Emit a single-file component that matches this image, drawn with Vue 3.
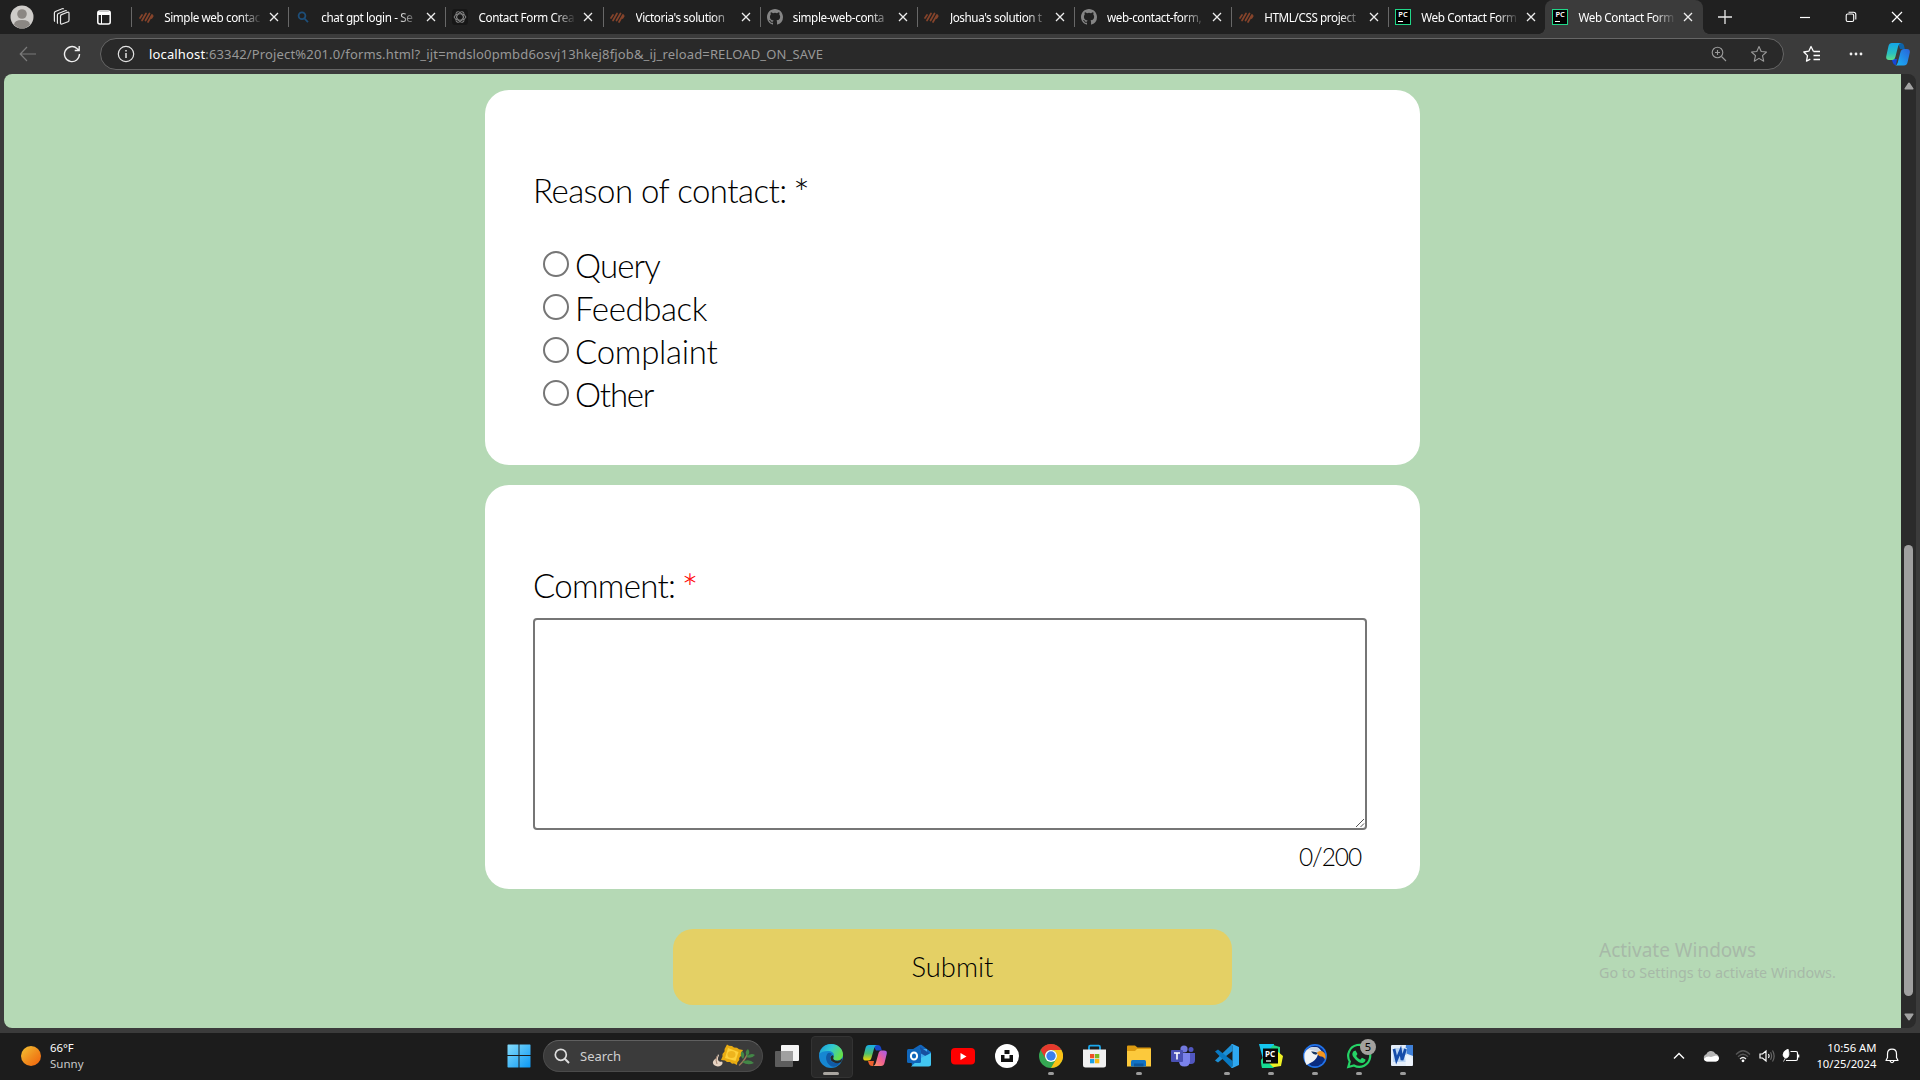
<script setup>
const tabs = [
  { icon: 'fcc', title: 'Simple web contac' },
  { icon: 'search', title: 'chat gpt login - Se' },
  { icon: 'gpt', title: 'Contact Form Crea' },
  { icon: 'fcc', title: "Victoria's solution" },
  { icon: 'github', title: 'simple-web-conta' },
  { icon: 'fcc', title: "Joshua's solution t" },
  { icon: 'github', title: 'web-contact-form,' },
  { icon: 'fcc', title: 'HTML/CSS project' },
  { icon: 'pc', title: 'Web Contact Form' },
  { icon: 'pc', title: 'Web Contact Form', active: true },
]
const reasons = ['Query', 'Feedback', 'Complaint', 'Other']
</script>

<template>
  <div class="screen">
    <header class="strip">
      <div class="lead">
        <svg class="avatar" width="24" height="28" viewBox="0 0 24 28"><circle cx="12" cy="14" r="11.5" fill="#cfcdca"/><circle cx="12" cy="11" r="4.8" fill="#8b8783"/><path d="M4 22q0-5 8-5t8 5q-8 7-16 0" fill="#8b8783"/></svg>
        <svg class="spaces" width="18" height="20" viewBox="0 0 18 20" fill="none" stroke="#e8e8e8" stroke-width="1.200" stroke-linejoin="round"><path d="M7.500 9.200q0-1.200 1-1.600l6-2.300q1.500-.4 1.500 1v7q0 1-1 1.400l-6 2.300q-1.500.4-1.500-1zM5 16.500q-.6-.3-.6-1V8q0-1 1-1.500l6.800-2.700q1-.3 1.500.3M2 14.500q-.6-.3-.6-1V6q0-1 1-1.500l6.800-2.700q1-.3 1.500.3"/></svg>
        <svg class="vert" width="14" height="15" viewBox="0 0 14 15"><rect x=".8" y="1" width="12.400" height="13" rx="2" fill="none" stroke="#fff" stroke-width="1.500"/><path d="M1 2h12v3H1z" fill="#fff"/><path d="M4.500 5v9" stroke="#fff"/></svg>
      </div>
      <div v-for="(t, i) in tabs" :key="i" class="tab" :class="{ active: t.active }">
        <span class="fav">
          <svg v-if="t.icon === 'fcc'" width="15" height="12" viewBox="0 0 15 12" stroke="#86442b" stroke-width="1.700" stroke-linecap="round"><path d="M1 7l2-3M3 9.500l4-7M6.500 9.500l4-7M9 11l4-7M12.500 7l1.200-2"/></svg>
          <svg v-else-if="t.icon === 'search'" width="12" height="12" viewBox="0 0 12 12" fill="none" stroke="#1d4e79" stroke-width="1.800"><circle cx="5" cy="4.800" r="3.400"/><path d="M7.500 7.500l3.500 3.700"/></svg>
          <svg v-else-if="t.icon === 'gpt'" width="16" height="16" viewBox="0 0 16 16"><rect width="16" height="16" rx="3" fill="#171717"/><g fill="none" stroke="#858585" stroke-width="1"><ellipse cx="8" cy="8" rx="5.800" ry="3.200"/><ellipse cx="8" cy="8" rx="5.800" ry="3.200" transform="rotate(60 8 8)"/><ellipse cx="8" cy="8" rx="5.800" ry="3.200" transform="rotate(120 8 8)"/></g></svg>
          <svg v-else-if="t.icon === 'github'" width="16" height="16" viewBox="0 0 16 16"><path fill="#858585" d="M8 0C3.580 0 0 3.580 0 8c0 3.540 2.290 6.530 5.470 7.590.4.070.55-.17.55-.38v-1.490c-2.010.37-2.530-.49-2.690-.94-.09-.23-.48-.94-.82-1.130-.28-.15-.68-.52-.01-.53.63-.01 1.080.58 1.230.82.72 1.210 1.870.87 2.330.66.07-.52.28-.87.51-1.070-1.780-.2-3.640-.89-3.640-3.950 0-.87.310-1.590.82-2.150-.08-.2-.36-1.020.08-2.120 0 0 .67-.21 2.200.82a7.600 7.600 0 0 1 4 0c1.530-1.040 2.200-.82 2.200-.82.44 1.100.16 1.920.08 2.120.51.560.82 1.270.82 2.150 0 3.070-1.870 3.750-3.650 3.950.29.25.54.730.54 1.480v2.200c0 .21.150.46.55.38A8 8 0 0 0 16 8c0-4.420-3.580-8-8-8z"/></svg>
          <span v-else class="pcfav"><b>PC</b><i></i></span>
        </span>
        <span class="title">{{ t.title }}</span>
        <svg class="x" width="10" height="10" viewBox="0 0 10 10" stroke="#eee" stroke-width="1.300"><path d="M1 1l8 8M9 1l-8 8"/></svg>
      </div>
      <svg class="plus" width="14" height="14" viewBox="0 0 14 14" stroke="#e8e8e8" stroke-width="1.300"><path d="M7 0v14M0 7h14"/></svg>
      <div class="winctl">
        <svg width="12" height="12" viewBox="0 0 12 12" stroke="#fff" stroke-width="1.200"><path d="M1 6.500h10"/></svg>
        <svg width="12" height="12" viewBox="0 0 12 12" fill="none" stroke="#fff" stroke-width="1.100"><rect x="1.200" y="3" width="7.500" height="7.500" rx="1.500"/><path d="M3.500 1.200h5q2.300 0 2.300 2.300v5"/></svg>
        <svg width="12" height="12" viewBox="0 0 12 12" stroke="#fff" stroke-width="1.200"><path d="M1 1l10 10M11 1L1 11"/></svg>
      </div>
    </header>

    <nav class="toolbar">
      <svg class="back" width="18" height="16" viewBox="0 0 18 16" fill="none" stroke="#7b7b7b" stroke-width="1.200"><path d="M17 8H1.500M8 1L1.200 8 8 15"/></svg>
      <svg class="reload" width="18" height="18" viewBox="0 0 18 18" fill="none" stroke="#eee" stroke-width="1.400"><path d="M16.500 9A7.500 7.500 0 1 1 14 3.500L16 5.200M16.200 1v4.500h-4.500"/></svg>
      <div class="address">
        <svg class="info" width="18" height="18" viewBox="0 0 18 18" fill="none" stroke="#e3e3e3" stroke-width="1.200"><circle cx="9" cy="9" r="7.700"/><path d="M9 8v5M9 5v1.500" stroke-width="1.500"/></svg>
        <span class="url"><b>localhost</b>:63342/Project%201.0/forms.html?_ijt=mdslo0pmbd6osvj13hkej8fjob&amp;_ij_reload=RELOAD_ON_SAVE</span>
        <svg class="zoomi" width="16" height="16" viewBox="0 0 16 16" fill="none" stroke="#9a9a9a" stroke-width="1.100"><circle cx="6.500" cy="6.500" r="5.300"/><path d="M10.500 10.500l4.500 4.500M6.500 4v5M4 6.500h5"/></svg>
        <svg class="star" width="18" height="18" viewBox="0 0 18 18" fill="none" stroke="#9a9a9a" stroke-width="1.100" stroke-linejoin="round"><path d="M9 1.500l2.200 5 5.300.5-4 3.700 1.200 5.500L9 13.400l-4.700 2.800 1.200-5.500-4-3.700 5.300-.5z"/></svg>
      </div>
      <svg class="favs" width="18" height="18" viewBox="0 0 18 18" fill="none" stroke="#fff" stroke-width="1.300" stroke-linejoin="round"><path d="M10.500 6.500L8 1.500 5.800 6.200.8 7l3.700 3.600-1 5.600 3.800-2M10.500 6.500H17M10.500 10.500H17M10.500 14.500H17"/></svg>
      <svg class="dots" width="14" height="4" viewBox="0 0 14 4" fill="#f0f0f0"><circle cx="2" cy="2" r="1.400"/><circle cx="7" cy="2" r="1.400"/><circle cx="12" cy="2" r="1.400"/></svg>
      <svg class="copilot" width="24" height="24" viewBox="0 0 24 24">
        <defs>
          <linearGradient id="cp1" x1="0" y1="0" x2="0" y2="1"><stop offset="0" stop-color="#13a5e8"/><stop offset=".6" stop-color="#2ac0c0"/><stop offset="1" stop-color="#5fdc8a"/></linearGradient>
          <linearGradient id="cp2" x1="1" y1="0" x2="0" y2="1"><stop offset="0" stop-color="#2a62d8"/><stop offset="1" stop-color="#18b8f8"/></linearGradient>
        </defs>
        <path d="M12 1h3q2.500 0 3 2.500l.8 3.500H14z" fill="#0d62a8"/><path d="M5.500 17H11l-1 6q-2.500 0-3-2z" fill="#1546d8"/>
        <path d="M6 1h9q-2 0-2.800 3L9.500 14.500Q8.700 18 6 18H3Q-.5 18 .3 14L2.500 4Q3.200 1 6 1z" fill="url(#cp1)"/><path d="M18 23.500H9q2 0 2.800-3L14.500 10Q15.300 7 18 7h3q3.500 0 2.700 4l-2.200 9.500q-.7 3-3.500 3z" fill="url(#cp2)"/>
      </svg>
    </nav>

    <div class="viewport">
      <main class="page">
        <section class="card reason">
          <h2 class="legend">Reason of contact: <span class="ast">*</span></h2>
          <label v-for="r in reasons" :key="r" class="opt"><input type="radio" name="reason"><span :class="r.toLowerCase()">{{ r }}</span></label>
        </section>
        <section class="card comment">
          <h2 class="legend">Comment: <span class="ast red">*</span></h2>
          <div class="area"><svg width="10" height="10" viewBox="0 0 10 10" stroke="#555" stroke-width="1"><path d="M1 9l8-8M5.500 9L9 5.500"/></svg></div>
          <div class="count">0/200</div>
        </section>
        <button class="submit">Submit</button>
        <div class="watermark"><p class="w1">Activate Windows</p><p class="w2">Go to Settings to activate Windows.</p></div>
      </main>
      <div class="scroll">
        <svg width="10" height="8" viewBox="0 0 10 8"><path d="M5 .5q.6 0 1 .7L9.500 6.500q.3 1-.7 1H1.200q-1 0-.7-1L4 1.200q.4-.7 1-.7z" fill="#a2a2a2"/></svg>
        <div class="thumb"></div>
        <svg width="10" height="8" viewBox="0 0 10 8"><path d="M5 7.500q.6 0 1-.7L9.500 1.500q.3-1-.7-1H1.200q-1 0-.7 1L4 6.800q.4.700 1 .7z" fill="#a2a2a2"/></svg>
      </div>
    </div>

    <footer class="taskbar">
      <div class="weather">
        <span class="sun"></span>
        <div><p class="temp">66°F</p><p class="cond">Sunny</p></div>
      </div>
      <svg class="start" width="24" height="24" viewBox="0 0 24 24"><defs><linearGradient id="wn" x1="0" y1="0" x2="1" y2="1"><stop offset="0" stop-color="#84dcfc"/><stop offset="1" stop-color="#0c98f4"/></linearGradient></defs><path d="M1 .5h10.500V11H.5V1zM12.500.5H23L23.500 1v10h-11zM.5 12h11v11.500H1L.5 23zM12.500 12h11v11l-.5.5H12.500z" fill="url(#wn)"/></svg>
      <div class="search">
        <svg width="16" height="16" viewBox="0 0 16 16" fill="none" stroke="#ddd" stroke-width="1.700"><circle cx="6.800" cy="6.800" r="5.500"/><path d="M10.800 10.800l4.200 4.200" stroke-width="2"/></svg>
        <span>Search</span>
        <svg class="food" width="46" height="24" viewBox="0 0 46 24"><path d="M6 10q-.5 4-3.500 5.500-3 2.500-.5 5.500 3.500 2.500 7 .5 2.500-2 1-4-3 1-4-1.500-.5-2 1-4.500z" fill="#e6d3c2"/><path d="M5 12q-2 4 0 8" stroke="#a58672" fill="none"/><path d="M15 .5l2 1.300 3 .2 2 1.500 3 .2 2 1.600 4 .7-2 3.500.2 2-2 2.500.1 2-2 2.500-.3 2.500-3-1.500-2 .2-2-1.600-3-.1-2-1.600-4-.4 1.500-3.500V10l2-2.500.1-2.500z" fill="#e9ac12"/><path d="M16 4l10.500 4-3 9L13 14z" fill="#fdd03a"/><ellipse cx="19.500" cy="10.500" rx="4" ry="3.500" fill="#eeb41e"/><path d="M27 21.500q6-5 9-13" stroke="#9a7a5a" stroke-width="1.500" fill="none"/><path d="M31 15q-4-4-1-8 4 3 1 8zM35 12q-3-4 1-7 3 4-1 7zM34 13q5-5 9-2-3 4-9 2zM30 18q7-4 12 1-6 3-12-1z" fill="#438747"/></svg>
      </div>
      <div class="apps">
        <div class="app"><svg width="24" height="24" viewBox="0 0 24 24"><rect x="6" y="1" width="18" height="16" rx="1" fill="#f4f4f4"/><rect y="7" width="18" height="16" rx="1" fill="#5d5d5d"/><path d="M6 7h12v10H6z" fill="#a0a0a0"/></svg></div>
        <div class="app edge on"><svg width="24" height="24" viewBox="0 0 24 24"><defs><linearGradient id="e1" x1="0" y1="0" x2="1" y2=".5"><stop offset="0" stop-color="#1897dc"/><stop offset=".5" stop-color="#31c9d1"/><stop offset="1" stop-color="#66e04a"/></linearGradient></defs><circle cx="12" cy="12" r="12" fill="#1687d2"/><path d="M.3 10C1.500 4 6 0 12 0c7 0 12 5 12 10.500 0 3.500-2.500 6-6 6-3 0-4.500-1.200-4-2.300 2-2.500 1-6.700-4-7.200-4-.3-8 .7-9.700 3z" fill="url(#e1)"/><path d="M9 9c-3 3-2.500 9 2 12.500 3 2.300 8 1.500 10.500-3.500-5 2.500-10 .5-10.500-4q0-2 2-4-2-1.700-4-1z" fill="#115aa5"/><path d="M14.300 13.500q-.7 3 4 3.200 3 0 5-2.500l-.9 3.800Q19 20 15 18.500T11.500 13q1-2 2.500-1.700 1 1 .3 2.200z" fill="#282828"/></svg></div>
        <div class="app"><svg width="24" height="24" viewBox="0 0 24 24"><defs><linearGradient id="c1" x1="0" y1="0" x2="0" y2="1"><stop offset="0" stop-color="#17aee8"/><stop offset=".55" stop-color="#4cc070"/><stop offset="1" stop-color="#f6d400"/></linearGradient><linearGradient id="c2" x1="1" y1="0" x2="0" y2="1"><stop offset="0" stop-color="#a35cf0"/><stop offset=".5" stop-color="#ee5f93"/><stop offset="1" stop-color="#ffa060"/></linearGradient></defs><path d="M10 1h5q2.500 0 3 2.500l.8 3H13z" fill="#1747c8"/><path d="M5 17h6l-1 5q-3 .5-4-2z" fill="#ee602d"/><path d="M6 1h8q-2 0-2.800 3L8.700 13Q8 16.500 5.500 16.500H3Q-.5 16.500.3 13L2.500 4Q3.200 1 6 1z" fill="url(#c1)"/><path d="M18 22H10q2 0 2.800-3l2.500-9Q16 6.500 18.500 6.500H21q3.500 0 2.700 3.500L21.500 19q-.7 3-3.500 3z" fill="url(#c2)"/></svg></div>
        <div class="app"><svg width="24" height="24" viewBox="0 0 24 24"><path d="M3 7l9.500-6q1-.5 2 0L24 8v12q0 2-2 2H5z" fill="#1266bd"/><path d="M7 5h13v9H7z" fill="#40a9ec"/><path d="M13 3l9 6v5l-9-5z" fill="#174f9f"/><path d="M12 15l12-6v11q0 2.500-2.500 2.500H4z" fill="#42c6f1"/><rect y="5" width="14" height="14" rx="1.500" fill="#1066ba"/><ellipse cx="7" cy="12" rx="3.100" ry="3.500" fill="none" stroke="#fff" stroke-width="2"/></svg></div>
        <div class="app"><svg width="24" height="24" viewBox="0 0 24 24"><rect y="4" width="24" height="16.500" rx="4" fill="#f00"/><path d="M9.500 9v7l6-3.500z" fill="#fff"/></svg></div>
        <div class="app"><svg width="24" height="24" viewBox="0 0 24 24"><circle cx="12" cy="12" r="12" fill="#fff"/><path d="M9.500 6h5v4h-5zM6 11h3.500v3.500h5V11H18v7H6z" fill="#111"/></svg></div>
        <div class="app run"><svg width="24" height="24" viewBox="0 0 24 24"><circle cx="12" cy="12" r="12" fill="#35a853"/><path d="M1.600 6A12 12 0 0 1 22.400 6H12a6 6 0 0 0-5.200 9z" fill="#e5392d"/><path d="M22.400 6A12 12 0 0 1 12 24l5.200-9A6 6 0 0 0 12 6z" fill="#fbc116"/><circle cx="12" cy="12" r="6" fill="#fff"/><circle cx="12" cy="12" r="4.700" fill="#3b7fee"/></svg></div>
        <div class="app"><svg width="24" height="24" viewBox="0 0 24 24"><path d="M6 6V3q0-1.300 1.300-1.300h8.400Q17 1.700 17 3v3" fill="none" stroke="#1ba7ec" stroke-width="1.800"/><path d="M0 5.500h23V21q0 2.500-2.500 2.500h-18Q0 23.500 0 21z" fill="#f1f1f1"/><path d="M7 10h4.300v4.300H7z" fill="#f05125"/><path d="M12 10h4.300v4.300H12z" fill="#7cb821"/><path d="M7 15h4.300v4.300H7z" fill="#1ba0e4"/><path d="M12 15h4.300v4.300H12z" fill="#fcb813"/></svg></div>
        <div class="app run"><svg width="24" height="24" viewBox="0 0 24 24"><path d="M0 2.500Q0 1.500 1 1.500h7l2.500 2H23q1 0 1 1V9H0z" fill="#dc9a10"/><path d="M0 7h8l2-2h14v17.500H0z" fill="#fcc93c"/><path d="M4 22.500v-5Q4 16 5.500 16h12q1.500 0 1.500 1.500v5z" fill="#1273c4"/><path d="M7 19.500h9.500v3H7z" fill="#0c579d"/></svg></div>
        <div class="app"><svg width="24" height="24" viewBox="0 0 24 24"><circle cx="13" cy="5" r="3.600" fill="#7279df"/><circle cx="20" cy="5.500" r="2.500" fill="#5157c0"/><path d="M16 9h8v7q0 4-4 4h-4z" fill="#5157c0"/><path d="M8 9h11v8q0 5.500-5.500 5.500T8 17z" fill="#7b83eb"/><rect y="6" width="12" height="12" rx="1" fill="#4950b3"/><path d="M3 9h6M6 9v6.500" stroke="#fff" stroke-width="1.600"/></svg></div>
        <div class="app run"><svg width="24" height="24" viewBox="0 0 24 24"><path d="M17.500 0v7L3 18.500 0 16.500 16 1z" fill="#1c8fd5"/><path d="M0 7.500l3-2L17.500 17v7q-1 0-2-1z" fill="#0879c2"/><path d="M17.500 0L24 3v18l-6.500 3q-1 0-1.500-1 1.500.3 1.500-1V2q0-1.500-1.500-1 .5-1 1.500-1z" fill="#2ea8f1"/></svg></div>
        <div class="app run"><svg width="24" height="24" viewBox="0 0 24 24"><path d="M0 0h15l-2 15-8 4z" fill="#15c6ef"/><path d="M14 1l7 2v8L9 24H3l-1-8z" fill="#20d887"/><path d="M18 7l6 5-2 10-13 2-2-5z" fill="#eef024"/><path d="M2 17l8 2 5 5H3z" fill="#16db92"/><rect x="4" y="4.500" width="15" height="15" fill="#080808"/><path d="M7 17h5" stroke="#fff" stroke-width="1.200"/></svg><b class="pctxt">PC</b></div>
        <div class="app run"><svg width="24" height="24" viewBox="0 0 24 24"><circle cx="12" cy="12" r="11.900" fill="#2172e8"/><circle cx="12" cy="12" r="10.300" fill="#0a2c80"/><path d="M1.500 9.500Q4 3.500 10 3q6-.3 8 4l-3 3q-1 5-5 7.500-4 2-6.500 3.500Q.5 15 1.500 9.500z" fill="#f0f3f5"/><path d="M5 5.500Q9 2 15 3.500l4 4-4 1q-3-2-10-3z" fill="#c9d4e2"/><path d="M8 7.500q4-.5 7 1.500l-2 1.800q-3-.3-5-3.300z" fill="#183863"/><path d="M14 8.500q4.500-3 7.500.5 2 3 .8 7-1.500-3.500-4-3.500-3 0-4.300-4z" fill="#f5961e"/></svg></div>
        <div class="app run"><svg width="26" height="26" viewBox="0 0 26 26"><path d="M2.300 24l1.500-5.500A11 11 0 1 1 8 22.500z" fill="none" stroke="#25d366" stroke-width="2.200"/><path d="M9.500 7.500l2 3.500-1.300 2q1.300 2.500 4 3.700l1.800-1.900 3.500 1.800q0 3-3 3.400-3 .5-7-3.500T6.500 10q.5-2.500 3-2.500z" fill="#25d366"/></svg><span class="badge">5</span></div>
        <div class="app run"><svg class="word" width="24" height="24" viewBox="0 0 24 24"><rect x="1" y="1" width="22" height="21" rx="1" fill="#e3edf9"/><path d="M16 1h7v11l-8-3z" fill="#3f80d8"/><path d="M4 4h13l-1 14H3z" fill="#b8d4f3"/><path d="M4 5l2.500 11L10.500 6.500l1.500 9.500 3.500-11" fill="none" stroke="#154caa" stroke-width="2.800"/><path d="M15 11l5 1 3 5-1 5h-6z" fill="#eef4fc"/></svg></div>
      </div>
      <div class="tray">
        <svg class="chev" width="12" height="8" viewBox="0 0 12 8" fill="none" stroke="#fff" stroke-width="1.400"><path d="M1 6.500l5-5 5 5"/></svg>
        <svg class="cloud" width="17" height="12" viewBox="0 0 17 12"><path d="M4 11.500a3.700 3.700 0 0 1-.6-7.200 5 5 0 0 1 9.100-.5 4 4 0 0 1 .5 7.700z" fill="#b5b5b5"/><path d="M4 11.500q-2.500-.3-3.200-2.500Q4 5.500 8 7l5-1.500q3 .5 3 3.200-.5 2.500-3 2.800z" fill="#fff"/></svg>
        <svg class="wifi" width="16" height="14" viewBox="0 0 16 14" fill="none" stroke="#555" stroke-width="1.300"><path d="M1 5.500q7-7.500 14 0M3 7.800q5-5 10 0"/><path d="M5 10q3-3 6 0" stroke="#eee"/><circle cx="8" cy="11.800" r="1.400" fill="#fff" stroke="none"/></svg>
        <svg class="vol" width="16" height="14" viewBox="0 0 16 14" fill="none" stroke="#fff" stroke-width="1.200"><path d="M1 5h2.500L7 2v10L3.500 9H1zM9.500 5q1.300 2 0 4"/><path d="M11.500 3.300q2.200 3.700 0 7.400M13.500 1.500q3.300 5.500 0 11" stroke="#666"/></svg>
        <svg class="bat" width="18" height="14" viewBox="0 0 18 14" fill="none" stroke="#fff" stroke-width="1.200"><path d="M8.500 2.500H14q1.500 0 1.500 1.500v6q0 1.500-1.500 1.500H4M16.700 5.500v3"/><path d="M6 0Q1 2 1 6q.5 3 3.500 3Q8.500 7.500 6 0zM1.500 12.500L4.500 7" fill="#fff" stroke-width=".8"/></svg>
        <div class="clock"><p class="time">10:56 AM</p><p class="date">10/25/2024</p></div>
        <svg class="bell" width="14" height="16" viewBox="0 0 14 16" fill="none" stroke="#fff" stroke-width="1.200" stroke-linejoin="round"><path d="M7 1.200q4.500 0 4.500 4.800v3.500l1.500 3H1l1.500-3V6Q2.500 1.200 7 1.200zM5 13q2 3.500 4 0"/></svg>
      </div>
    </footer>
  </div>
</template>

<style>
body { margin: 0; overflow: hidden; background: #1c1c1c; }
</style>

<style scoped>
* { box-sizing: border-box; }
p, h2 { margin: 0; font-weight: inherit; }
svg { display: block; flex: none; }
.screen { width: 1920px; height: 1080px; display: flex; flex-direction: column; overflow: hidden; background: #3b3b3b; font-family: "Noto Sans", "Open Sans", sans-serif; color: #fff; }
.strip { height: 34px; flex: none; background: #202020; display: flex; align-items: center; }
.lead { width: 131.200px; flex: none; display: flex; align-items: center; padding-left: 10px; }
.spaces { margin-left: 19px; }
.vert { margin-left: 26px; }
.tab { width: 157.150px; height: 34px; flex: none; position: relative; display: flex; align-items: center; }
.tab::before { content: ""; width: 1px; height: 20px; background: #686868; flex: none; }
.tab.active { background: #3b3b3b; border-radius: 8px 8px 0 0; }
.tab.active::before { background: none; }
.tab.active::after { content: ""; position: absolute; left: -6px; right: -6px; bottom: 0; height: 6px; background: radial-gradient(circle at 0 0, transparent 5.500px, #3b3b3b 6px) 0 0 / 6px 6px no-repeat, radial-gradient(circle at 100% 0, transparent 5.500px, #3b3b3b 6px) 100% 0 / 6px 6px no-repeat; }
.fav { width: 28px; flex: none; display: flex; justify-content: center; }
.title { width: 98px; margin-left: 4px; font-size: 11.700px; line-height: 16px; letter-spacing: -0.4px; white-space: nowrap; mask-image: linear-gradient(90deg, #000 78%, transparent 100%); -webkit-mask-image: linear-gradient(90deg, #000 78%, transparent 100%); }
.x { margin-left: 7px; }
.pcfav { width: 16px; height: 16px; background: #000; border: 1px solid #21d789; position: relative; display: block; }
.pcfav b { display: block; font-size: 7.500px; line-height: 9px; padding-left: 2px; font-weight: 600; }
.pcfav i { display: block; width: 5px; height: 1px; background: #fff; margin: 2px 0 0 2px; }
.plus { margin-left: 15.500px; }
.winctl { margin-left: auto; display: flex; gap: 34px; padding-right: 17px; }
.toolbar { height: 40px; flex: none; display: flex; align-items: center; }
.back { margin-left: 19px; }
.reload { margin-left: 26px; }
.address { width: 1684px; height: 32px; margin-left: 19px; background: #292929; border: 1px solid #666; border-radius: 16px; display: flex; align-items: center; }
.info { margin-left: 16px; }
.url { margin-left: 14px; font-size: 13px; letter-spacing: 0.15px; color: #989898; white-space: nowrap; }
.url b { color: #fff; font-weight: 400; }
.zoomi { margin-left: auto; }
.star { margin: 0 15px 0 23px; }
.favs { margin-left: 19px; }
.dots { margin-left: 28px; }
.copilot { margin-left: 23px; }
.viewport { height: 954px; flex: none; margin: 0 4px; display: flex; border-radius: 8px; overflow: hidden; background: #2b2b2b; }
.page { width: 1897px; height: 954px; background: #b5d9b5; position: relative; display: flex; flex-direction: column; align-items: center; padding-top: 16px; font-family: "Lato", sans-serif; font-weight: 300; color: #000; }
.card { width: 935px; flex: none; background: #fff; border-radius: 24px; padding: 0 48px; }
.reason { height: 375px; padding-top: 79px; }
.comment { height: 404px; margin-top: 20px; padding-top: 79px; }
.legend { height: 42px; font-size: 33px; line-height: 42px; letter-spacing: -0.53px; }
.comment .legend { letter-spacing: -0.7px; }
.ast { display: inline-block; line-height: 30px; font-size: 40px; vertical-align: -5px; margin-left: -2px; }
.opt { display: flex; align-items: center; height: 43px; font-size: 33px; }
.legend + .opt { margin-top: 32px; }
.opt input { appearance: none; width: 26px; height: 26px; margin: 0 6px 0 10px; border: 2px solid #767676; border-radius: 50%; position: relative; top: -1px; }
.query { letter-spacing: -0.9px; }
.feedback { letter-spacing: -0.4px; }
.complaint { letter-spacing: -0.28px; }
.other { letter-spacing: -1.200px; }
.red { color: #f00; }
.area { width: 834px; height: 212px; border: 2px solid #767676; border-radius: 4px; margin-top: 12px; display: flex; justify-content: flex-end; align-items: flex-end; }
.count { width: 834px; padding-right: 6px; text-align: right; font-size: 24.500px; letter-spacing: -1.100px; line-height: 32px; margin-top: 11px; }
.submit { width: 559px; height: 76px; flex: none; margin-top: 40px; border: 0; border-radius: 20px; background: #e4d065; font: inherit; font-size: 27.400px; padding: 0 0 1px; color: #000; }
.watermark { position: absolute; left: 1595px; top: 864px; font-family: "Noto Sans", sans-serif; font-weight: 400; color: #a7b9a8; white-space: nowrap; }
.w1 { font-size: 19px; line-height: 25px; }
.w2 { font-size: 14.300px; line-height: 20px; }
.scroll { width: 15px; display: flex; flex-direction: column; align-items: center; padding: 8px 0; }
.thumb { width: 9px; height: 451px; margin: 455px 0 17px; flex: none; border-radius: 5px; background: #a0a0a0; }
.taskbar { height: 47px; flex: none; margin-top: 5px; background: #1c1c1c; display: flex; align-items: center; padding-bottom: 1px; }
.weather { width: 506.500px; flex: none; display: flex; padding-left: 21px; font-size: 11.300px; line-height: 16px; align-items: center; }
.sun { width: 20px; height: 20px; margin-right: 9px; border-radius: 50%; background: linear-gradient(135deg, #f3c534, #f08a1c 55%, #f2600c); }
.cond { color: #c8c8c8; font-size: 11.500px; }
.start { margin-right: 12.500px; }
.search { width: 220px; height: 32px; flex: none; border-radius: 16px; background: #3b3b3b; border: 1px solid #4b4b4b; border-top-color: #606060; display: flex; align-items: center; padding-left: 10px; font-size: 13px; color: #d0d0d0; }
.search span { margin-left: 10px; }
.food { margin-left: auto; margin-right: 4px; }
.apps { display: flex; margin-left: 2px; }
.app { width: 44px; height: 46px; flex: none; position: relative; display: flex; align-items: center; justify-content: center; }
.edge::before { content: ""; position: absolute; left: 2px; top: 3px; width: 40px; height: 40px; background: #282828; border: 1px solid #333; border-radius: 4px; }
.edge svg { position: relative; }
.word { margin-right: 2px; }
.run::after, .on::after { content: ""; position: absolute; left: 19px; top: 39px; width: 6px; height: 3px; border-radius: 2px; background: #9b9b9b; }
.on::after { left: 14px; width: 16px; background: #a9a5a0; }
.pctxt { position: absolute; left: 16px; top: 16px; font-size: 8px; line-height: 10px; }
.badge { position: absolute; left: 23px; top: 6px; width: 16px; height: 16px; border-radius: 50%; background: #a3a19e; color: #000; font-size: 11px; line-height: 16px; text-align: center; }
.tray { margin-left: auto; display: flex; align-items: center; }
.cloud { margin-left: 18px; }
.wifi { margin-left: 15px; }
.vol { margin-left: 8px; }
.bat { margin-left: 7px; }
.clock { width: 77px; text-align: right; font-size: 11.300px; line-height: 16px; }
.bell { margin: 0 21.500px 0 8px; }
</style>
